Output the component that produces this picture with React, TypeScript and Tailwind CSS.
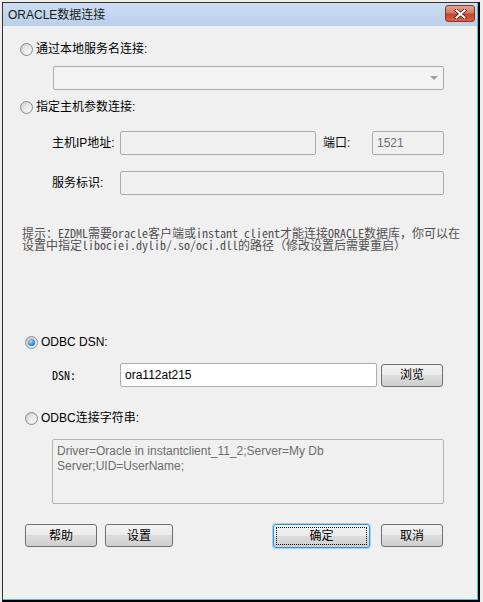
import React from 'react';

const sans = "font-['Liberation_Sans','Noto_Sans_CJK_SC',sans-serif]";
const mono = "font-['Noto_Sans_Mono_CJK_SC','Liberation_Mono','Noto_Sans_CJK_SC',monospace]";

const Radio = ({ checked = false }: { checked?: boolean }) => (
  <div className="w-[13px] h-[13px] rounded-full border border-[#8c8c8c] bg-[linear-gradient(135deg,#c9c9c9,#f4f4f4)] flex items-center justify-center shrink-0">
    {checked ? (
      <div className="w-[7px] h-[7px] rounded-full bg-[radial-gradient(circle_at_40%_35%,#a7e4ff,#2a86cf_60%,#134d86)]" />
    ) : (
      <div className="w-[9px] h-[9px] rounded-full bg-[linear-gradient(135deg,#d6d6d6,#fbfbfb)]" />
    )}
  </div>
);

const Button = ({ label, w, focused = false }: { label: string; w: string; focused?: boolean }) => (
  <div
    className={`${w} ${focused ? 'h-[24px] border-[#3c8fd0] shadow-[0_0_0_1px_#9ad6f7]' : 'h-[23px] border-[#707070]'} border rounded-[3px] bg-[linear-gradient(#f2f2f2_0%,#ebebeb_50%,#dddddd_50%,#cfcfcf_100%)] flex items-center justify-center p-[2px]`}
  >
    <div
      className={`w-full h-full flex items-center justify-center text-[12px] text-black ${focused ? 'border border-dotted border-black' : ''}`}
    >
      {label}
    </div>
  </div>
);

const Field = ({ w, text, white = false }: { w: string; text?: string; white?: boolean }) => (
  <div
    className={`${w} h-[24px] border border-[#acacac] rounded-[2px] flex items-center px-[4px] text-[12px] ${white ? 'bg-white text-black' : 'bg-[#f0f0f0] text-[#6d6d6d]'}`}
  >
    {text}
  </div>
);

export default function App() {
  return (
    <div className={`w-[483px] h-[602px] bg-[#eeeeee] pl-[2px] pt-[2px] overflow-hidden ${sans}`}>
      <div className="w-[478px] h-[600px] border-l border-t border-[#333] border-r-2 border-b-2 border-r-black border-b-black">
        <div className="w-full h-full border-r border-b border-[#47c2ef] flex flex-col">
          {/* Title bar */}
          <div className="h-[23px] bg-[linear-gradient(#cddef2,#b9cfe9)] flex items-center pl-[5px] pr-[2px]">
            <span className="text-[12px] text-[#1a1a1a] flex-1">ORACLE数据连接</span>
            <div className="w-[30px] h-[17px] -mt-[2px] rounded-[3px] border border-[#8a3426] bg-[linear-gradient(#e6a290_0%,#d77961_45%,#c4432b_55%,#d2664a_100%)] flex items-center justify-center">
              <svg width="13" height="10" viewBox="0 0 13 10">
                <path d="M2.5 1.5 L10.5 8.5 M10.5 1.5 L2.5 8.5" stroke="#5a1e14" strokeWidth="3.6" strokeLinecap="square" />
                <path d="M2.5 1.5 L10.5 8.5 M10.5 1.5 L2.5 8.5" stroke="#ffffff" strokeWidth="2" strokeLinecap="square" />
              </svg>
            </div>
          </div>

          {/* Content */}
          <div className="flex-1 bg-[#f0f0f0] flex flex-col text-[12px] text-black">
            <div className="mt-[15px] h-[16px] pl-[17px] flex items-center gap-[3px]">
              <Radio />
              <span>通过本地服务名连接:</span>
            </div>

            <div className="mt-[9px] ml-[50px] w-[391px] h-[24px] border border-[#acacac] rounded-[2px] bg-[#f3f3f3] flex items-center justify-end pr-[5px]">
              <div className="w-0 h-0 border-x-[4px] border-x-transparent border-t-[4px] border-t-[#a0a0a0]" />
            </div>

            <div className="mt-[9px] h-[16px] pl-[17px] flex items-center gap-[3px]">
              <Radio />
              <span>指定主机参数连接:</span>
            </div>

            <div className="mt-[16px] pl-[49px] flex items-center">
              <span className="w-[68px]">主机IP地址:</span>
              <Field w="w-[196px]" />
              <span className="ml-[7px] w-[49px]">端口:</span>
              <Field w="w-[72px]" text="1521" />
            </div>

            <div className="mt-[16px] pl-[49px] flex items-center">
              <span className="w-[68px]">服务标识:</span>
              <Field w="w-[324px]" />
            </div>

            <div className={`mt-[32px] pl-[19px] text-[12px] leading-[12px] text-[#505050] whitespace-nowrap ${mono}`}>
              <div>提示：EZDML需要oracle客户端或instant client才能连接ORACLE数据库，你可以在</div>
              <div>设置中指定libociei.dylib/.so/oci.dll的路径（修改设置后需要重启）</div>
            </div>

            <div className="mt-[83px] h-[16px] pl-[22px] flex items-center gap-[3px]">
              <Radio checked />
              <span>ODBC DSN:</span>
            </div>

            <div className="mt-[13px] pl-[49px] flex items-center">
              <span className={`w-[68px] ${mono}`}>DSN:</span>
              <Field w="w-[257px]" text="ora112at215" white />
              <div className="ml-[4px]">
                <Button label="浏览" w="w-[62px]" />
              </div>
            </div>

            <div className="mt-[23px] h-[16px] pl-[22px] flex items-center gap-[3px]">
              <Radio />
              <span>ODBC连接字符串:</span>
            </div>

            <div className="mt-[13px] ml-[49px] w-[392px] h-[65px] border border-[#b4b4b4] rounded-[2px] bg-[#f0f0f0] px-[4px] pt-[4px] text-[12px] leading-[15px] text-[#6d6d6d]">
              <div>Driver=Oracle in instantclient_11_2;Server=My Db</div>
              <div>Server;UID=UserName;</div>
            </div>

            <div className="mt-[20px] pl-[22px] pr-[34px] flex items-start">
              <Button label="帮助" w="w-[72px]" />
              <div className="ml-[8px]">
                <Button label="设置" w="w-[68px]" />
              </div>
              <div className="flex-1" />
              <Button label="确定" w="w-[97px]" focused />
              <div className="ml-[11px]">
                <Button label="取消" w="w-[62px]" />
              </div>
            </div>
          </div>
        </div>
      </div>
    </div>
  );
}
